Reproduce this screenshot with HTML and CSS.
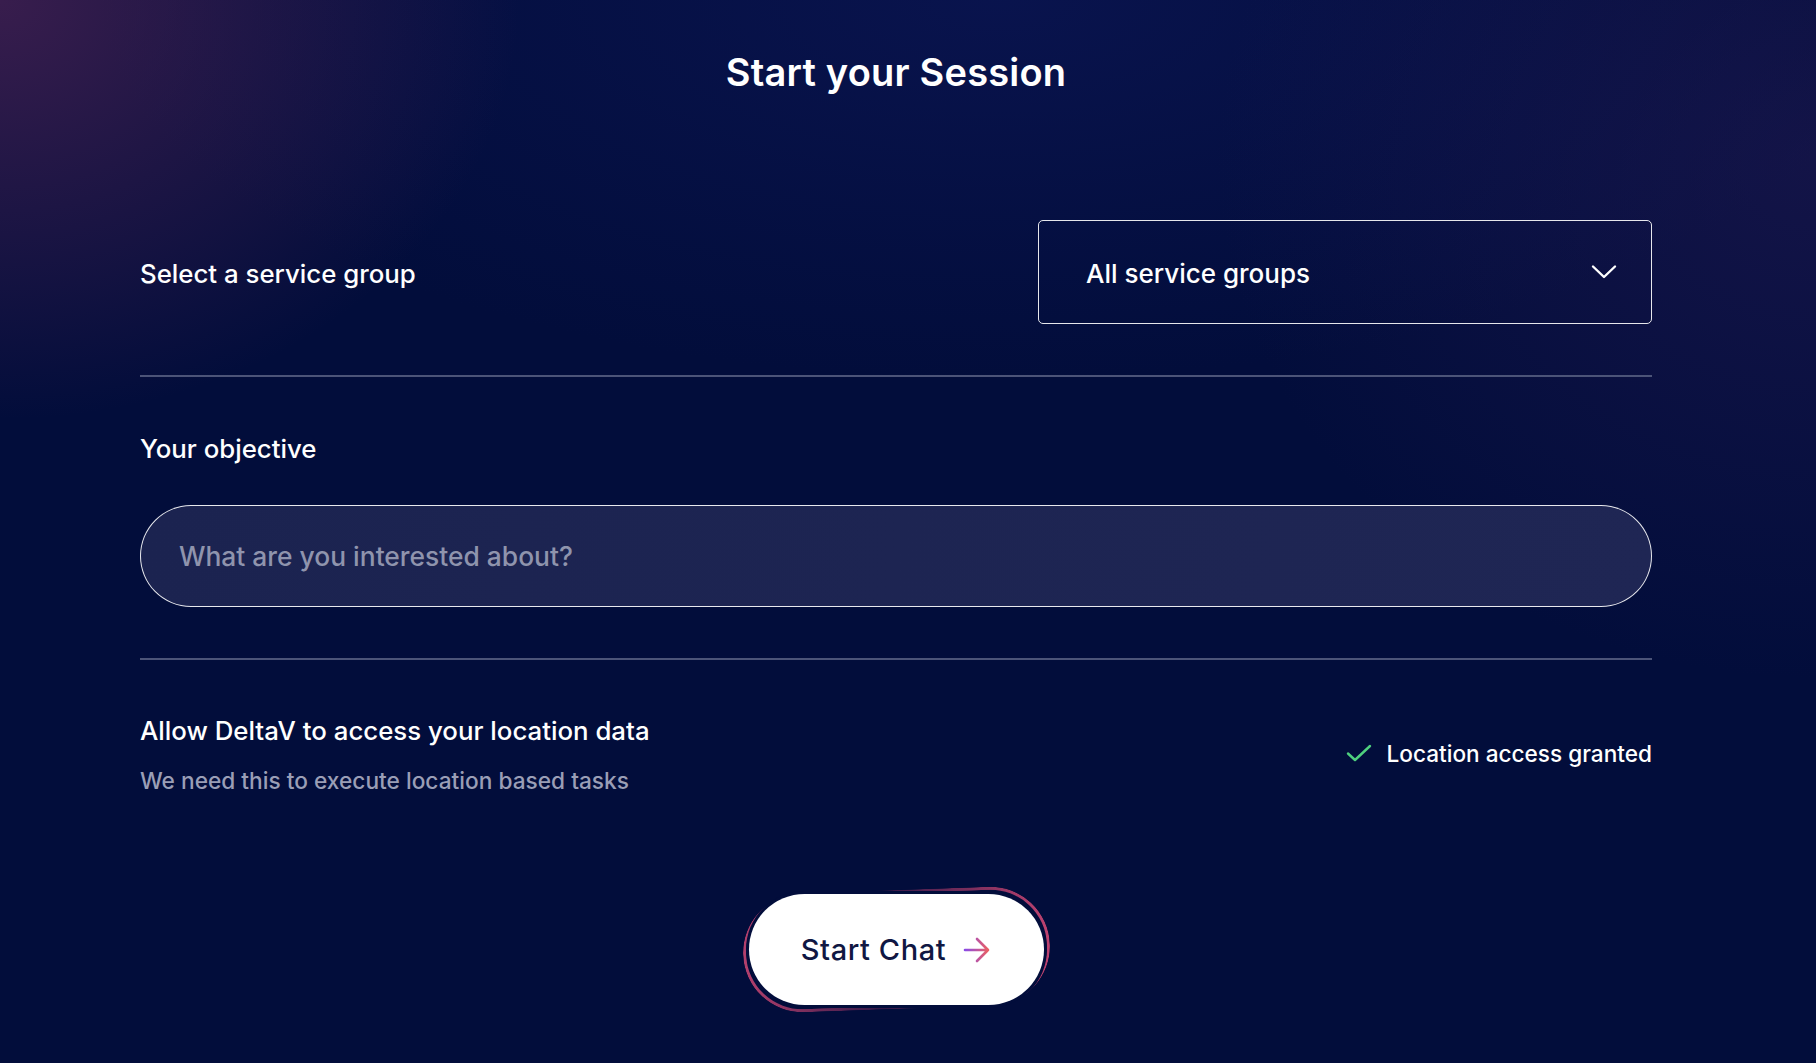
FILE: index.html
```html
<!DOCTYPE html>
<html lang="en">
<head>
<meta charset="utf-8">
<title>Start your Session</title>
<link rel="stylesheet" href="styles.css">
</head>
<body>
<main class="page">
  <h1 class="title">Start your Session</h1>

  <section class="row row-select">
    <div class="label">Select a service group</div>
    <div class="select">
      <span class="select-value">All service groups</span>
      <svg class="chevron" width="26" height="16" viewBox="0 0 26 16" fill="none">
        <path d="M2 2.5 L13 13 L24 2.5" stroke="#ffffff" stroke-width="2.4" stroke-linecap="round" stroke-linejoin="round"/>
      </svg>
    </div>
  </section>

  <hr class="divider">

  <section class="objective">
    <div class="label">Your objective</div>
    <input class="objective-input" type="text" placeholder="What are you interested about?">
  </section>

  <hr class="divider">

  <section class="row row-location">
    <div class="location-text">
      <div class="label">Allow DeltaV to access your location data</div>
      <div class="sub">We need this to execute location based tasks</div>
    </div>
    <div class="granted">
      <svg class="check" width="26" height="20" viewBox="0 0 26 20" fill="none">
        <path d="M2 10.5 L9 17 L24 3" stroke="#4fd07e" stroke-width="2.4" stroke-linecap="round" stroke-linejoin="round"/>
      </svg>
      <span>Location access granted</span>
    </div>
  </section>

  <div class="actions">
    <button class="start-btn" type="button">
      <span>Start Chat</span>
      <svg class="arrow" width="28" height="26" viewBox="0 0 28 26" fill="none">
        <defs>
          <linearGradient id="ag" x1="0" y1="0" x2="1" y2="0">
            <stop offset="0" stop-color="#8a4be6"/>
            <stop offset="1" stop-color="#ea5f63"/>
          </linearGradient>
        </defs>
        <path d="M2 13 H25 M14 2 L25 13 L14 24" stroke="url(#ag)" stroke-width="2.6" stroke-linecap="round" stroke-linejoin="round"/>
      </svg>
    </button>
  </div>
</main>
</body>
</html>
```

FILE: styles.css
```css
* { box-sizing: border-box; }

html, body {
  margin: 0;
  height: 100%;
}

body {
  min-height: 1063px;
  font-family: "Inter", "Lato", "Liberation Sans", sans-serif;
  color: #ffffff;
  background:
    radial-gradient(ellipse 520px 420px at 0 0, rgba(110, 45, 95, 0.5), rgba(110, 45, 95, 0) 100%),
    radial-gradient(ellipse 600px 520px at 100% 15%, rgba(45, 30, 90, 0.4), rgba(45, 30, 90, 0) 100%),
    radial-gradient(ellipse 900px 380px at 55% 0, rgba(12, 22, 85, 0.7), rgba(12, 22, 85, 0) 100%),
    #020d3b;
  overflow: hidden;
}

.page {
  width: 1512px;
  margin-left: 140px;
  padding-top: 49px;
}

.title {
  margin: 0;
  text-align: center;
  font-size: 38px;
  line-height: 46px;
  font-weight: 600;
  letter-spacing: 0.2px;
}

.row {
  display: flex;
  justify-content: space-between;
}

.row-select {
  margin-top: 125px;
  align-items: center;
}

.row-select .label { padding-top: 3px; }

.label {
  font-size: 25.8px;
  line-height: 32px;
  font-weight: 500;
}

.select {
  width: 614px;
  height: 104px;
  border: 1.5px solid rgba(255, 255, 255, 0.9);
  border-radius: 5px;
  display: flex;
  align-items: center;
  justify-content: space-between;
  padding: 0 34px 0 47px;
}

.select-value {
  font-size: 26px;
  font-weight: 500;
  padding-top: 2px;
}

.chevron { display: block; }

.divider {
  margin: 51px 0 0;
  border: 0;
  height: 2px;
  background: #4c5478;
}

.objective {
  padding-top: 56px;
}

.objective-input {
  display: block;
  width: 100%;
  height: 102px;
  margin-top: 40px;
  border-radius: 60px;
  border: 1.5px solid rgba(255, 255, 255, 0.9);
  background: linear-gradient(100deg, #1b2350 0%, #1f2654 100%);
  padding: 0 38px;
  font-family: inherit;
  font-size: 26.4px;
  color: #ffffff;
  outline: none;
}

.objective-input::placeholder {
  color: #8f94ad;
  font-weight: 500;
}

.objective + .divider { margin-top: 51px; }

.row-location {
  margin-top: 55px;
  align-items: center;
}

.location-text .sub {
  margin-top: 18px;
  font-size: 22.7px;
  line-height: 32px;
  font-weight: 500;
  color: #9a9eb6;
}

.granted {
  display: flex;
  align-items: center;
  gap: 15px;
  font-size: 22.6px;
  font-weight: 500;
  padding-bottom: 6px;
}

.check { display: block; }

.actions {
  display: flex;
  justify-content: center;
  margin-top: 97px;
}

.start-btn {
  position: relative;
  width: 295px;
  height: 111px;
  border: 0;
  border-radius: 60px;
  background: #ffffff;
  display: flex;
  align-items: center;
  justify-content: center;
  gap: 17px;
  font-family: inherit;
  font-size: 29px;
  letter-spacing: 0.6px;
  font-weight: 500;
  color: #101743;
  cursor: pointer;
  box-shadow: 0 0 0 3px #020d3b;
}

.start-btn::before {
  content: "";
  position: absolute;
  inset: -4px -6px;
  border-radius: 70px;
  padding: 3px;
  background: linear-gradient(90deg, rgba(200, 70, 115, 0.9) 0%, rgba(120, 40, 90, 0.4) 45%, rgba(200, 70, 115, 0.95) 100%);
  -webkit-mask: linear-gradient(#000 0 0) content-box, linear-gradient(#000 0 0);
  -webkit-mask-composite: xor;
  mask: linear-gradient(#000 0 0) content-box exclude, linear-gradient(#000 0 0);
  transform: rotate(-2deg);
  z-index: -1;
}

.start-btn span { display: block; }
.arrow { display: block; }
```
